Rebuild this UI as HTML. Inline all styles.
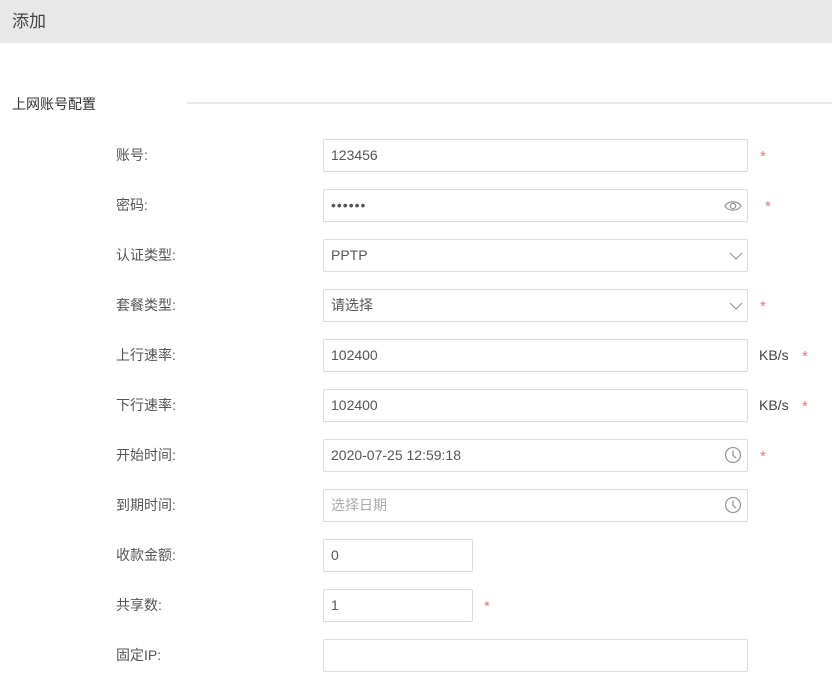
<!DOCTYPE html>
<html><head><meta charset="utf-8"><style>
body{margin:0;width:832px;height:696px;background:#fff;font-family:"Liberation Sans","Noto Sans CJK SC",sans-serif;position:relative;overflow:hidden;color:#555}
.hd{position:absolute;left:0;top:0;width:832px;height:43px;background:#e8e8e8}
.hd span{position:absolute;left:12px;top:7px;font-size:17px;color:#444}
.sec{position:absolute;left:12px;top:94px;font-size:14px;color:#333}
.line{position:absolute;left:187px;top:102px;width:645px;height:2px;background:#e8e8e8}
.lb{position:absolute;left:116px;font-size:14px;color:#555;line-height:20px}
.in{position:absolute;left:323px;width:423px;height:31px;border:1px solid #dcdcdc;border-radius:2px;box-sizing:content-box;font-size:14px;line-height:31px;text-indent:7px;color:#555}
.in.s{width:148px}
.ph{color:#aaa}
.st{position:absolute;color:#e87878;font-size:15px;line-height:20px}
.u{position:absolute;left:759px;font-size:14px;line-height:20px;color:#444}
svg{position:absolute}
</style></head><body>
<div class="hd"><span>添加</span></div>
<div class="sec">上网账号配置</div>
<div class="line"></div>

<div class="lb" style="top:145px">账号:</div>
<div class="in" style="top:139px">123456</div>
<div class="st" style="left:760px;top:147px">*</div>

<div class="lb" style="top:195px">密码:</div>
<div class="in" style="top:189px;letter-spacing:1px">••••••</div>
<svg style="left:724px;top:199px" width="18" height="14" viewBox="0 0 18 14"><path d="M1 7C4 1.5 14 1.5 17 7C14 12.5 4 12.5 1 7Z" fill="none" stroke="#999" stroke-width="1.3"/><circle cx="9" cy="7" r="2.6" fill="none" stroke="#999" stroke-width="1.3"/></svg>
<div class="st" style="left:765px;top:197px">*</div>

<div class="lb" style="top:245px">认证类型:</div>
<div class="in" style="top:239px">PPTP</div>
<svg style="left:729px;top:252px" width="14" height="8" viewBox="0 0 14 8"><path d="M1 1L7 7L13 1" fill="none" stroke="#999" stroke-width="1.2"/></svg>

<div class="lb" style="top:295px">套餐类型:</div>
<div class="in" style="top:289px">请选择</div>
<svg style="left:729px;top:302px" width="14" height="8" viewBox="0 0 14 8"><path d="M1 1L7 7L13 1" fill="none" stroke="#999" stroke-width="1.2"/></svg>
<div class="st" style="left:760px;top:297px">*</div>

<div class="lb" style="top:345px">上行速率:</div>
<div class="in" style="top:339px">102400</div>
<div class="u" style="top:345px">KB/s</div>
<div class="st" style="left:802px;top:347px">*</div>

<div class="lb" style="top:395px">下行速率:</div>
<div class="in" style="top:389px">102400</div>
<div class="u" style="top:395px">KB/s</div>
<div class="st" style="left:802px;top:397px">*</div>

<div class="lb" style="top:445px">开始时间:</div>
<div class="in" style="top:439px">2020-07-25 12:59:18</div>
<svg style="left:724px;top:446px" width="18" height="18" viewBox="0 0 18 18"><circle cx="9" cy="9" r="7.5" fill="none" stroke="#999" stroke-width="1.3"/><path d="M9 4.5V9.5L12 12" fill="none" stroke="#999" stroke-width="1.3"/></svg>
<div class="st" style="left:760px;top:447px">*</div>

<div class="lb" style="top:495px">到期时间:</div>
<div class="in ph" style="top:489px">选择日期</div>
<svg style="left:724px;top:496px" width="18" height="18" viewBox="0 0 18 18"><circle cx="9" cy="9" r="7.5" fill="none" stroke="#999" stroke-width="1.3"/><path d="M9 4.5V9.5L12 12" fill="none" stroke="#999" stroke-width="1.3"/></svg>

<div class="lb" style="top:545px">收款金额:</div>
<div class="in s" style="top:539px">0</div>

<div class="lb" style="top:595px">共享数:</div>
<div class="in s" style="top:589px">1</div>
<div class="st" style="left:484px;top:597px">*</div>

<div class="lb" style="top:645px">固定IP:</div>
<div class="in" style="top:639px"></div>
</body></html>
